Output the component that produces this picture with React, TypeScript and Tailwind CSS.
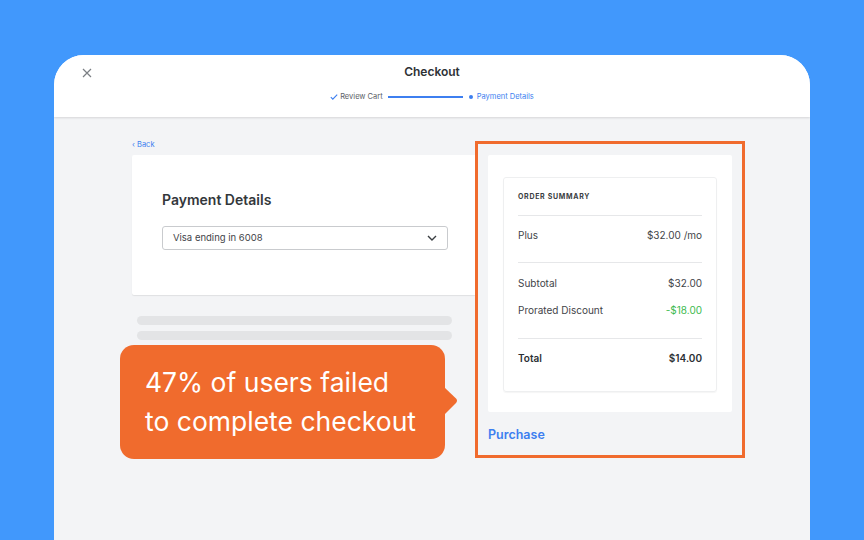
import * as React from "react";

const Divider = () => <div className="h-px bg-[#e6e7e9]" />;

const Row: React.FC<{ label: string; value: string; valueClass?: string; bold?: boolean }> = ({
  label,
  value,
  valueClass,
  bold,
}) => (
  <div
    className={`flex justify-between text-[10px] leading-[14px] ${
      bold ? "font-semibold text-[#2b2f33]" : "text-[#3f4449]"
    }`}
  >
    <span>{label}</span>
    <span className={valueClass}>{value}</span>
  </div>
);

export default function App() {
  return (
    <div
      className="w-[864px] h-[540px] overflow-hidden bg-[#4198fc] pt-[55px] px-[54px]"
      style={{ fontFamily: "Inter, 'Noto Sans', sans-serif" }}
    >
      <div className="relative h-[485px] flex flex-col rounded-t-[30px] bg-white overflow-hidden">
        {/* header */}
        <div className="relative z-10 h-[62px] shrink-0 flex flex-col items-center bg-white shadow-[0_1px_2px_rgba(0,0,0,0.12)]">
          <svg
            className="absolute left-[28px] top-[13px]"
            width="10"
            height="10"
            viewBox="0 0 10 10"
            fill="none"
            stroke="#7b7f84"
            strokeWidth="1.2"
          >
            <path d="M1 1l8 8M9 1L1 9" />
          </svg>
          <p className="mt-[7px] text-[12px] leading-[20px] font-semibold text-[#2e3236]">Checkout</p>
          <div className="mt-[10px] flex items-center h-[10px] text-[7.5px] leading-[10px]">
            <svg width="8" height="8" viewBox="0 0 8 8" fill="none" stroke="#3d7ff0" strokeWidth="1.1">
              <path d="M0.8 4.2l2 2L7.2 1.6" />
            </svg>
            <span className="ml-[2px] text-[#5b6066]">Review Cart</span>
            <div className="ml-[5px] w-[75px] h-[1.5px] bg-[#3d7ff0]" />
            <div className="ml-[6px] w-[4px] h-[4px] rounded-full bg-[#3d7ff0]" />
            <span className="ml-[4px] text-[#3d7ff0]">Payment Details</span>
          </div>
        </div>

        {/* body */}
        <div className="flex-1 flex bg-[#f3f4f6] pl-[78px] pt-[22px]">
          <div className="w-[343px] flex flex-col">
            <p className="h-[10px] mt-[1px] text-[7.5px] leading-[10px] text-[#3d7ff0]">‹ Back</p>
            <div className="mt-[5px] h-[140px] bg-white rounded-l-[2px] shadow-[0_1px_1px_rgba(0,0,0,0.08)] pl-[30px] pt-[35px]">
              <p className="text-[14px] leading-[20px] font-semibold text-[#33373b]">Payment Details</p>
              <div className="mt-[16px] w-[286px] h-[24px] flex items-center justify-between border border-[#c9cbce] rounded-[3px] pl-[10px] pr-[10px]">
                <span className="text-[9.5px] text-[#3f4449]">Visa ending in 6008</span>
                <svg width="10" height="6" viewBox="0 0 10 6" fill="none" stroke="#3a3e42" strokeWidth="1.4">
                  <path d="M1 1l4 4 4-4" />
                </svg>
              </div>
            </div>
            <div className="mt-[21px] ml-[5px] flex flex-col gap-[6px]">
              <div className="w-[315px] h-[9px] rounded-full bg-[#e3e4e6]" />
              <div className="w-[315px] h-[9px] rounded-full bg-[#e3e4e6]" />
            </div>
          </div>

          <div className="mt-[2px] w-[270px] h-[317px] border-[3px] border-[#f06b2d] px-[10px] pt-[11px]">
            <div className="h-[257px] bg-white rounded-[2px] px-[15px] pt-[22px]">
              <div className="h-[215px] border border-[#eeeff0] rounded-[3px] px-[14px] pt-[14px] shadow-[0_1px_1px_rgba(0,0,0,0.04)]">
                <p className="text-[7px] leading-[10px] font-bold tracking-[0.1em] text-[#3a3e42]">ORDER SUMMARY</p>
                <div className="mt-[13px]">
                  <Divider />
                </div>
                <div className="mt-[12px]">
                  <Row label="Plus" value="$32.00 /mo" />
                </div>
                <div className="mt-[20px]">
                  <Divider />
                </div>
                <div className="mt-[13px] flex flex-col gap-[13px]">
                  <Row label="Subtotal" value="$32.00" />
                  <Row label="Prorated Discount" value="-$18.00" valueClass="text-[#3dba4e]" />
                </div>
                <div className="mt-[21px]">
                  <Divider />
                </div>
                <div className="mt-[12px]">
                  <Row label="Total" value="$14.00" bold />
                </div>
              </div>
            </div>
            <p className="mt-[14px] text-[12.5px] leading-[18px] font-semibold text-[#3d7ff0]">Purchase</p>
          </div>
        </div>

        {/* annotation bubble */}
        <div className="absolute left-[66px] top-[290px] w-[325px] h-[114px] rounded-[14px] bg-[#f06b2d] pl-[25px] pt-[18px]">
          <p className="text-[26.5px] leading-[39px] text-white">
            47% of users failed
            <br />
            to complete checkout
          </p>
          <svg className="absolute left-[324px] top-[42px]" width="15" height="30" viewBox="0 0 15 30">
            <path d="M0 0 L12 11.5 Q14 13.5 12 16 L0 28 Z" fill="#f06b2d" />
          </svg>
        </div>
      </div>
    </div>
  );
}
